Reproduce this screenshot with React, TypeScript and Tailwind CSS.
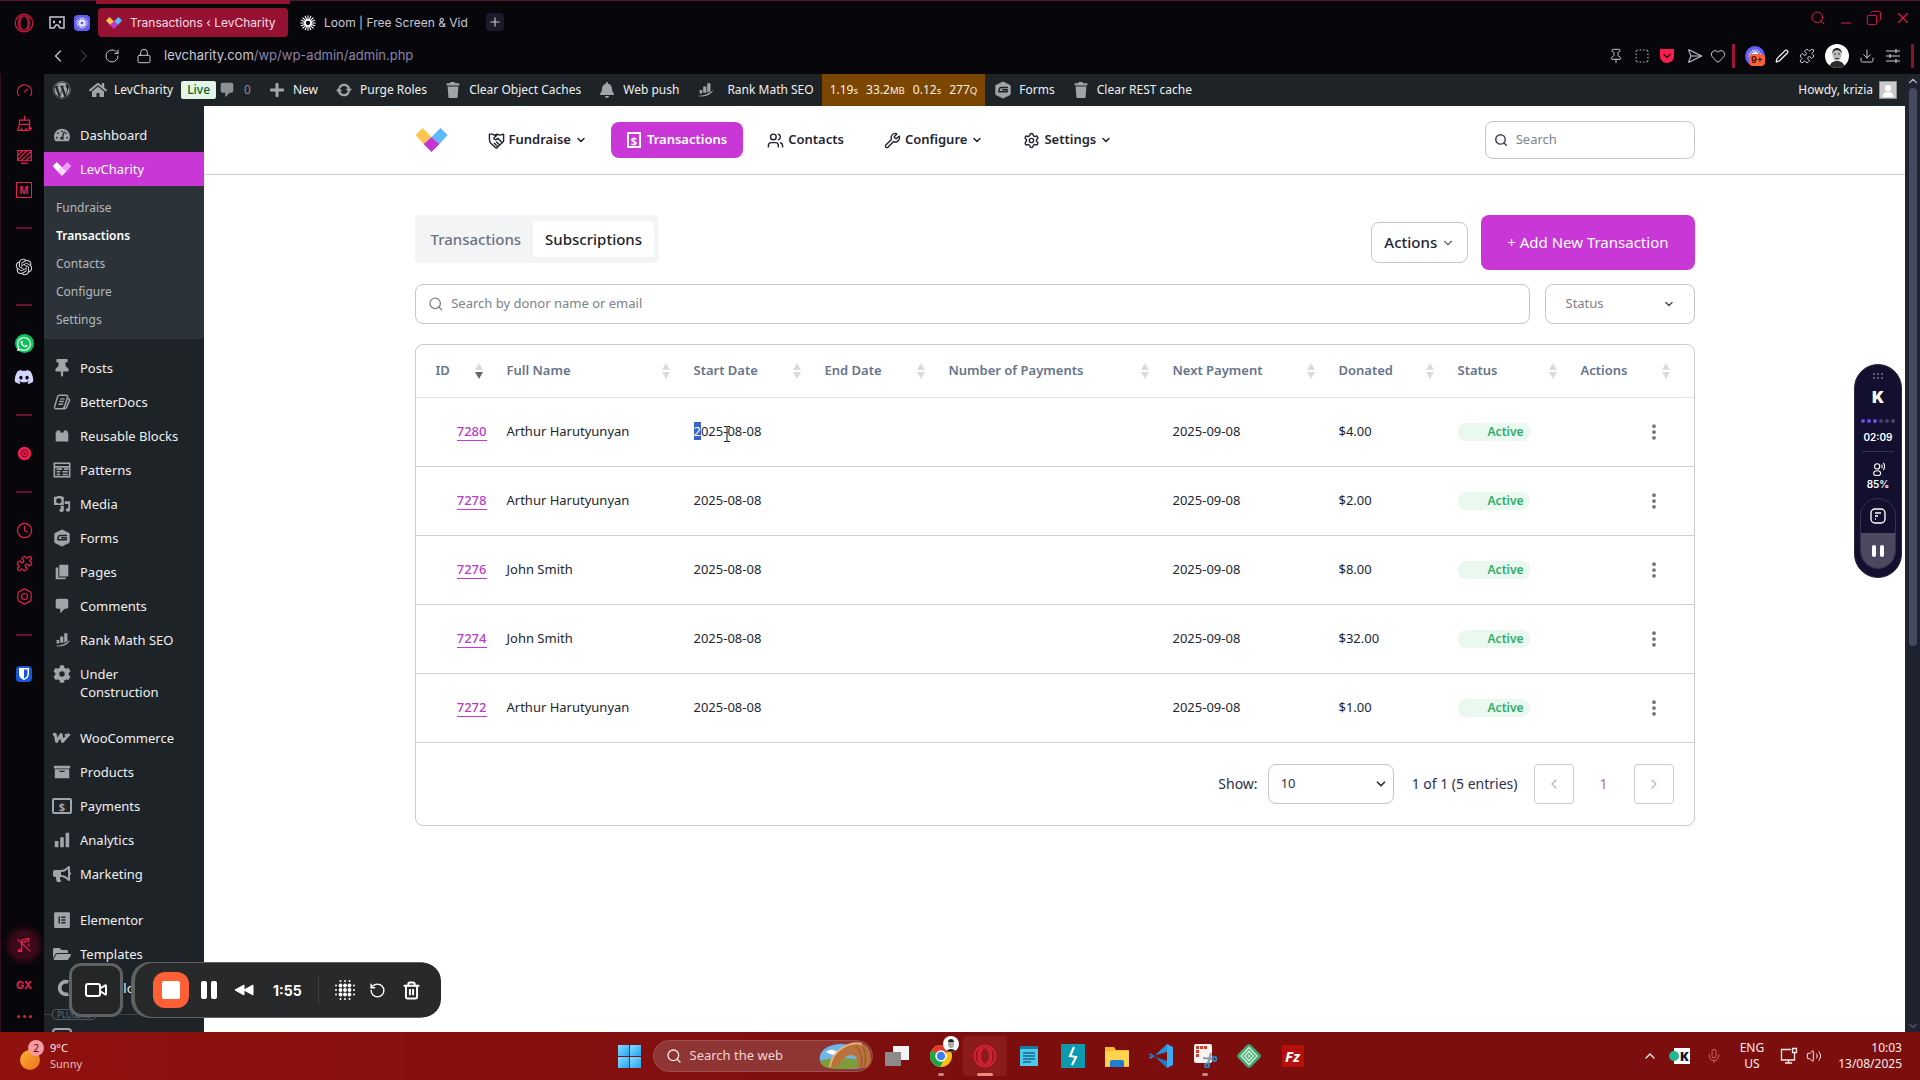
import type { ComponentType, ReactNode } from 'react'
import {
  ChevronDown, ChevronLeft, ChevronRight, ChevronUp, Clock, Download, Heart, Lock, Mic, Minus,
  MoreVertical, Pin, Plus, Puzzle, RotateCcw, RotateCw, Search, Send, Settings,
  Trash2, Users, Video, Volume2, Wrench, X, SquareDashed, Copy, Pen, Gauge
} from 'lucide-react'
import {
  FaBell, FaBullhorn, FaCog, FaDiscord, FaElementor, FaFolderOpen, FaHome, FaPlus,
  FaThumbtack, FaWhatsapp, FaWordpress, FaTachometerAlt
} from 'react-icons/fa'
import { RiOpenaiFill } from 'react-icons/ri'
import { clsx } from 'clsx'

type IconType = ComponentType<{ className?: string }>

interface Subscription {
  id: number
  name: string
  start: string
  next: string
  donated: string
}

const SUBSCRIPTIONS: Subscription[] = [
  { id: 7280, name: 'Arthur Harutyunyan', start: '2025-08-08', next: '2025-09-08', donated: '$4.00' },
  { id: 7278, name: 'Arthur Harutyunyan', start: '2025-08-08', next: '2025-09-08', donated: '$2.00' },
  { id: 7276, name: 'John Smith', start: '2025-08-08', next: '2025-09-08', donated: '$8.00' },
  { id: 7274, name: 'John Smith', start: '2025-08-08', next: '2025-09-08', donated: '$32.00' },
  { id: 7272, name: 'Arthur Harutyunyan', start: '2025-08-08', next: '2025-09-08', donated: '$1.00' }
]

const COLUMNS = [
  { label: 'ID', width: 'w-[75px]' },
  { label: 'Full Name', width: 'w-[187px]' },
  { label: 'Start Date', width: 'w-[131px]' },
  { label: 'End Date', width: 'w-[124px]' },
  { label: 'Number of Payments', width: 'w-[224px]' },
  { label: 'Next Payment', width: 'w-[166px]' },
  { label: 'Donated', width: 'w-[119px]' },
  { label: 'Status', width: 'w-[123px]' },
  { label: 'Actions', width: 'w-[129px]' }
]

/* ---------- Icons ---------- */

function Glyph({ className, children, box = '0 0 20 20' }: { className?: string; children: ReactNode; box?: string }) {
  return (
    <svg viewBox={box} className={className} fill="currentColor" aria-hidden="true">
      {children}
    </svg>
  )
}

function LevLogo({ className, mono }: { className?: string; mono?: boolean }) {
  return (
    <svg viewBox="0 0 32 24" className={className} aria-hidden="true">
      <path d="M0 7 7 0l9 9-8 7z" fill={mono ? '#ffffff' : '#fdc44f'} />
      <path d="m32 7-7-7-9 9 8 7z" fill={mono ? '#eb9df3' : '#5cb8ff'} />
      <path d="m16 9 8 7-8 8-8-8z" fill={mono ? '#f8dcfb' : '#c137cf'} />
    </svg>
  )
}

const OperaIcon: IconType = ({ className }) => (
  <svg viewBox="0 0 24 24" className={className} fill="none" stroke="currentColor" strokeWidth="1.6" aria-hidden="true">
    <circle cx="12" cy="12" r="10.5" />
    <ellipse cx="12" cy="12" rx="5" ry="8.5" />
    <path d="M8 3.500C4.500 8 4.500 16 8 20.500M16 3.500c3.500 4.500 3.500 12.500 0 17" />
  </svg>
)

const LoomIcon: IconType = ({ className }) => (
  <svg viewBox="0 0 24 24" className={className} stroke="currentColor" strokeLinecap="round" fill="none" aria-hidden="true">
    <circle cx="12" cy="12" r="4.500" strokeWidth="2.600" />
    <path d="M12 1v6M12 17v6M1 12h6M17 12h6M4.200 4.200l4.300 4.300M15.500 15.500l4.300 4.300M19.800 4.200l-4.300 4.300M8.500 15.500l-4.300 4.300M7.800 1.800l2 5M14.200 17.200l2 5M16.200 1.800l-2 5M9.800 17.200l-2 5M1.800 7.800l5 2M17.200 14.200l5 2M1.800 16.200l5-2M17.200 9.800l5-2" strokeWidth="1.600" />
  </svg>
)

const TrashSolid: IconType = ({ className }) => (
  <Glyph className={className}><path d="M7 1h5v1.500h5v2.500H3V2.500h4zM4 6h12l-1 13H5z" /></Glyph>
)
const CommentIcon: IconType = ({ className }) => (
  <Glyph className={className}><path d="M5 2h10q2 0 2 2v7q0 2-2 2h-2l-5 5v-5H5q-2 0-2-2V4q0-2 2-2z" /></Glyph>
)
const SyncIcon: IconType = ({ className }) => (
  <svg viewBox="0 0 20 20" className={className} fill="none" stroke="currentColor" strokeWidth="2.600" aria-hidden="true">
    <path d="M5 7.500a5.500 5.500 0 0 1 10.500 2M15 12.500a5.500 5.500 0 0 1-10.500-2" />
    <path d="M12 8.500h7l-3.500 4.500zM8 11.500H1L4.500 7z" fill="currentColor" stroke="none" />
  </svg>
)
const RankIcon: IconType = ({ className }) => (
  <Glyph className={className}>
    <path d="M4 10h3v4H4zM8 6h3.500v7H8zM12.500 2.500H16v9l-3.500 1.500zM1 16c6 1 12-1 18-6-2 6-12 9-18 6z" />
  </Glyph>
)
const FormsIcon: IconType = ({ className }) => (
  <svg viewBox="0 0 20 20" className={className} aria-hidden="true">
    <path d="M10 1l8 4v10l-8 4-8-4V5z" fill="currentColor" stroke="currentColor" strokeLinejoin="round" />
    <path d="M15.500 7.300H8q-2.500 0-2.500 4.700h9V9.800H9" fill="none" stroke="#1d2327" strokeWidth="1.700" />
  </svg>
)
const DocsIcon: IconType = ({ className }) => (
  <svg viewBox="0 0 20 20" className={className} fill="none" stroke="currentColor" strokeWidth="1.600" aria-hidden="true">
    <path d="M7 2.500h7q3 0 2 3l-3 9q-1 3-3 3H4q-3 0-2-3l3-10q.5-2 2-2zM17 6q2 1 1 3l-3 7q-1 2-4 1.500M8 6.500h5M7 9.500h5M6 12.500h5" />
  </svg>
)
const BlocksIcon: IconType = ({ className }) => (
  <Glyph className={className}><path d="M4 4h4v2h4V4h4v2h1v10H3V6h1z" /></Glyph>
)
const PatternsIcon: IconType = ({ className }) => (
  <svg viewBox="0 0 20 20" className={className} fill="none" stroke="currentColor" strokeWidth="1.800" aria-hidden="true">
    <rect x="1.500" y="2.500" width="17" height="15" />
    <path d="M2 6.500h16M4 9h6M4 12h4M4 15h4M12 9h5M10.500 12h6M10.500 15h6" />
  </svg>
)
const MediaIcon: IconType = ({ className }) => (
  <Glyph className={className}>
    <path fillRule="evenodd" d="M2 2h2l1-1h4l1 1h2v9H1V2zm4.500 1.500a3 3 0 1 0 0 6 3 3 0 0 0 0-6zM13 7h6v9q0 2.500-2.500 2.500T14 16.500t3-1.800V10h-4zM8 12h4v5q0 2-2.500 2T7 17t2-2z" />
  </Glyph>
)
const PagesIcon: IconType = ({ className }) => (
  <Glyph className={className}><path d="M7 2h10v13H7zM3 5h3v11h8v2H3z" /></Glyph>
)
const WooIcon: IconType = ({ className }) => (
  <svg viewBox="0 0 20 20" className={className} fill="none" stroke="currentColor" strokeWidth="3.200" strokeLinejoin="round" aria-hidden="true">
    <path d="M0 6h2.500l1.500 8 5-8 1.500 8L18 5.500" />
    <path d="M13 6.500h6" strokeWidth="2" />
  </svg>
)
const ProductsIcon: IconType = ({ className }) => (
  <Glyph className={className}><path fillRule="evenodd" d="M1 3h18v3H1zM2 7h16v10H2zm5 1.500v1.500h6V8.500z" /></Glyph>
)
const PaymentsIcon: IconType = () => (
  <span className="flex h-4 w-5 items-center justify-center rounded-xs border-2 text-[11px] leading-none font-bold text-[#a0a5aa]">$</span>
)
const BarsIcon: IconType = ({ className }) => (
  <Glyph className={className}><path d="M2 11h4v7H2zM8 7h4v11H8zM14 2h4v16h-4z" /></Glyph>
)
const CrocoIcon: IconType = ({ className }) => (
  <svg viewBox="0 0 20 20" className={className} fill="none" stroke="currentColor" strokeWidth="4" aria-hidden="true">
    <path d="M17 3.500A7 7 0 1 0 17 16.500" />
  </svg>
)
const ReceiptIcon: IconType = ({ className }) => (
  <span className={clsx('flex items-center justify-center border-2 text-[11px] leading-none font-bold', className)}>$</span>
)
const HandshakeIcon: IconType = ({ className }) => (
  <svg viewBox="0 0 24 24" className={className} fill="none" stroke="currentColor" strokeWidth="2" strokeLinejoin="round" strokeLinecap="round" aria-hidden="true">
    <path d="M2 3h4l3 1.500L13 3l4 1.500L22 3v10l-9 9c-1 .8-2 .5-3-.5L4 16C2 14 2 12 2 10zM13 4 8 9c1 3 4 2 6 0l5 5M12 14l4 4M9 16l4 4" />
  </svg>
)

const CleanerIcon: IconType = ({ className }) => (
  <svg viewBox="0 0 20 20" className={className} fill="none" stroke="currentColor" strokeWidth="1.400" aria-hidden="true">
    <path d="M10 1v5M4 6h12v5H4zM4 11l-2 7h13l1-7M6 18l1-3M11 18l1-3M17 14v4M15 16h4" />
  </svg>
)
const StripesIcon: IconType = ({ className }) => (
  <svg viewBox="0 0 20 20" className={className} fill="none" stroke="currentColor" strokeWidth="1.400" aria-hidden="true">
    <path d="M2 3h16v12H2zM2 9l6-6M2 14 13 3M6 15 18 4M11 15l7-6M6 18h8" />
  </svg>
)
const ModsIcon: IconType = ({ className }) => (
  <span className={clsx('flex items-center justify-center border text-[10px] leading-none font-bold', className)}>M</span>
)
const PlayerIcon: IconType = ({ className }) => (
  <svg viewBox="0 0 20 20" className={className} aria-hidden="true">
    <circle cx="10" cy="10" r="8" fill="currentColor" />
    <circle cx="10" cy="10" r="4" fill="none" stroke="#5c0518" />
    <path d="m9 8 3 2-3 2z" fill="#5c0518" />
  </svg>
)
const HexGear: IconType = ({ className }) => (
  <svg viewBox="0 0 20 20" className={className} fill="none" stroke="currentColor" strokeWidth="1.400" aria-hidden="true">
    <path d="m10 1 3 1.500 4.500 2.500.5 5-.5 5-4.500 2.500L10 19l-3-1.500L2.500 15 2 10l.5-5L7 2.500z" />
    <circle cx="10" cy="10" r="3.500" />
  </svg>
)

/* ---------- Browser chrome ---------- */

function BrowserBar() {
  return (
    <header className="relative shrink-0 bg-[#07060b] text-[#c9c7d3] font-[Inter,sans-serif]">
      <div className="absolute top-0 left-0 h-px w-full bg-[#5a1230]" />
      <div className="absolute top-0 left-24 h-1 w-[194px] bg-[#93122f]" />
      <div className="flex h-[37px] items-end pl-3">
        <div className="flex h-[29px] items-center pl-0.5">
          <OperaIcon className="size-5 text-[#c3193f]" />
          <svg viewBox="0 0 18 14" className="ml-3.5 h-3.5 w-4.5" fill="none" stroke="currentColor" strokeWidth="1.500" aria-hidden="true">
            <path d="M2 1h14v11h-4l-2-3H8l-2 3H2z" />
            <path d="M5 6h2M11 6h2" strokeWidth="2.500" />
          </svg>
          <span className="ml-2 flex size-4 items-center justify-center rounded bg-[#625df5] text-white">
            <LoomIcon className="size-3" />
          </span>
        </div>
        <button className="ml-2 flex h-[29px] w-[190px] items-center gap-2 rounded-sm bg-[#951232] pl-2 text-[12px] whitespace-nowrap text-[#fbdfe6]">
          <LevLogo className="h-3 w-4 shrink-0" />
          Transactions ‹ LevCharity
        </button>
        <button className="flex h-[29px] w-[190px] items-center gap-2 pl-3 text-[12px] whitespace-nowrap">
          <LoomIcon className="size-4 shrink-0 text-white" />
          Loom | Free Screen &amp; Vid
        </button>
        <button aria-label="New tab" className="mb-1.5 ml-2 flex size-4.5 items-center justify-center rounded bg-[#1c1a2a]">
          <Plus className="size-3.5" />
        </button>
        <div className="mb-1.5 ml-auto flex items-center gap-3 pr-2 text-[#e21c4a]">
          <Search className="size-4" strokeWidth={1.500} />
          <Minus className="mt-2.5 size-4" strokeWidth={1.500} />
          <Copy className="size-4 -scale-x-100" strokeWidth={1.500} />
          <X className="size-4.5" strokeWidth={1.500} />
        </div>
      </div>
      <div className="flex h-[37px] items-center pl-12">
        <ChevronLeft className="size-5" strokeWidth={1.500} />
        <ChevronRight className="ml-1.5 size-5 text-[#3a3845]" strokeWidth={1.500} />
        <RotateCw className="ml-2.5 size-4" strokeWidth={1.500} />
        <Lock className="ml-4 size-4" strokeWidth={1.500} />
        <p className="ml-3 text-[13px]">
          levcharity.com<span className="text-[#8a82a8]">/wp/wp-admin/admin.php</span>
        </p>
        <div className="ml-auto flex items-center gap-2.5 pr-1.5">
          <Pin className="size-4" strokeWidth={1.500} />
          <SquareDashed className="size-4" strokeWidth={1.500} />
          <span className="flex h-3.5 w-3.5 items-center justify-center rounded-t-sm rounded-b-full bg-[#fa1e4e] text-[#3d0512]">
            <ChevronDown className="size-3" strokeWidth={3} />
          </span>
          <Send className="size-4 rotate-45" strokeWidth={1.500} />
          <Heart className="size-4" strokeWidth={1.500} />
          <span className="-ml-1 h-6 w-[3px] bg-[#a0163a]" />
          <span className="relative flex size-5 items-center justify-center rounded-full bg-[#625df5] text-white">
            <LoomIcon className="size-3.5" />
            <span className="absolute top-2 left-1 rounded-sm bg-[#ff6137] px-0.5 text-[9px] leading-3 font-medium text-black">9+</span>
          </span>
          <Pen className="size-3.5 text-white" strokeWidth={2} />
          <Puzzle className="size-4" strokeWidth={1.500} />
          <svg viewBox="0 0 24 24" className="size-6 rounded-full bg-white" aria-hidden="true">
            <path d="M4 24c1-6 5-7 8-7s7 1 8 7z" fill="#2d2d2d" />
            <ellipse cx="12" cy="11" rx="4.500" ry="6" fill="#b9b9b9" />
            <path d="M7 10c0-8 10-8 10 0-1-3-3-4-5-4s-4 1-5 4z" fill="#222" />
            <path d="M9 10h2M13 10h2M10 14.500h4" stroke="#333" />
          </svg>
          <Download className="size-4" strokeWidth={1.500} />
          <svg viewBox="0 0 16 16" className="size-4" fill="none" stroke="currentColor" strokeWidth="1.200" aria-hidden="true">
            <path d="M1 3h14M1 8h14M1 13h14M11 1v4M5 6v4M11 11v4" />
          </svg>
          <span className="h-6 w-[3px] bg-[#85132f]" />
        </div>
      </div>
    </header>
  )
}

const Dash = () => (
  <li className="flex h-11 w-full items-center justify-center">
    <span className="h-0.5 w-4 rounded bg-[#6b122f]" />
  </li>
)

function RailIcon({ icon: Icon, className = 'size-[17px]' }: { icon: IconType; className?: string }) {
  return (
    <li className="flex h-[33px] items-center justify-center">
      <Icon className={className} />
    </li>
  )
}

const thin = (Icon: typeof Clock): IconType => ({ className }) => <Icon className={className} strokeWidth={1.700} />
const ThinGauge = thin(Gauge)
const ThinClock = thin(Clock)
const ThinPuzzle = thin(Puzzle)

function OperaRail() {
  return (
    <nav className="flex w-11 shrink-0 flex-col border-l border-[#30101f] bg-[#07060b] pl-[3px] text-[#e8204f]">
      <ul>
        <RailIcon icon={ThinGauge} />
        <RailIcon icon={CleanerIcon} />
        <RailIcon icon={StripesIcon} />
        <RailIcon icon={ModsIcon} className="size-4" />
        <Dash />
        <RailIcon icon={RiOpenaiFill} className="size-5 text-[#cfcfd4]" />
        <Dash />
        <li className="flex h-[33px] items-center justify-center">
          <span className="flex size-[19px] items-center justify-center rounded-full bg-[#0bc45b] text-white">
            <FaWhatsapp className="size-4" />
          </span>
        </li>
        <RailIcon icon={FaDiscord} className="size-5 text-[#d5d5ff]" />
        <Dash />
        <RailIcon icon={PlayerIcon} />
        <Dash />
        <RailIcon icon={ThinClock} />
        <RailIcon icon={ThinPuzzle} />
        <RailIcon icon={HexGear} />
        <Dash />
        <li className="flex h-[33px] items-center justify-center">
          <svg viewBox="0 0 16 16" className="size-4 rounded-sm bg-[#1a56d6]" aria-hidden="true">
            <path d="M3 2h10v6c0 3-2 5-5 6-3-1-5-3-5-6z" fill="#fff" />
            <path d="M8 3.500h3.500V8c0 2-1.500 3.500-3.500 4.500z" fill="#1a56d6" />
          </svg>
        </li>
      </ul>
      <ul className="mt-auto flex flex-col items-center gap-[18px] pb-2.5">
        <li className="flex size-7 items-center justify-center rounded-full bg-[#3b0a1a] shadow-[0_0_6px_3px_#3b0a1a]">
          <svg viewBox="0 0 20 20" className="size-4" fill="none" stroke="currentColor" strokeWidth="1.600" aria-hidden="true">
            <path d="M7 16V4l9-2v3L7 7M3 16h4v2H3zM2 3l16 15M16 8v4" />
          </svg>
        </li>
        <li className="font-[Inter,sans-serif] text-[11px] font-bold">GX</li>
        <li className="flex gap-[3px] pt-1 pb-1">
          <span className="size-[3px] rounded-full bg-current" />
          <span className="size-[3px] rounded-full bg-current" />
          <span className="size-[3px] rounded-full bg-current" />
        </li>
      </ul>
    </nav>
  )
}

/* ---------- WordPress admin ---------- */

function BarItem({ icon: Icon, children, small, wide }: { icon: IconType; children?: ReactNode; small?: boolean; wide?: boolean }) {
  return (
    <a href="#" className={clsx('flex h-full items-center px-2', wide ? 'gap-3' : 'gap-1.5')}>
      <span className="flex w-5 justify-center">
        <Icon className={clsx('text-[#a0a5aa]', small ? 'size-4' : 'size-[18px]')} />
      </span>
      {children}
    </a>
  )
}

function AdminBar() {
  return (
    <div className="flex h-8 shrink-0 items-center bg-[#1d2327] text-[12px] whitespace-nowrap text-[#f0f0f1]">
      <BarItem icon={FaWordpress} />
      <BarItem icon={FaHome}>
        LevCharity
        <span className="ml-0.5 rounded-xs bg-[#e3f5e6] px-1.5 leading-[18px] font-medium text-[#0e5f22]">Live</span>
      </BarItem>
      <a href="#" className="-ml-1.5 flex items-center gap-2 pr-2 text-[#8c9196]">
        <CommentIcon className="size-[18px]" />0
      </a>
      <BarItem icon={FaPlus} small>New</BarItem>
      <BarItem icon={SyncIcon}>Purge Roles</BarItem>
      <BarItem icon={TrashSolid}>Clear Object Caches</BarItem>
      <BarItem icon={FaBell} small>Web push</BarItem>
      <BarItem icon={RankIcon} wide>Rank Math SEO</BarItem>
      <a href="#" className="flex h-full items-center gap-2 bg-[#7a4600] px-2 text-[#fbf1e0]">
        <span>1.19<small>s</small></span>
        <span>33.2<small>MB</small></span>
        <span>0.12<small>s</small></span>
        <span>277<small>Q</small></span>
      </a>
      <BarItem icon={FormsIcon}>Forms</BarItem>
      <BarItem icon={TrashSolid}>Clear REST cache</BarItem>
      <a href="#" className="ml-auto flex items-center gap-1.5 pr-2">
        Howdy, krizia
        <svg viewBox="0 0 18 18" className="size-[18px] border border-[#8c8f94] bg-[#c9c9c9]" aria-hidden="true">
          <circle cx="9" cy="7" r="3.500" fill="#fff" />
          <path d="M3 17c0-4 3-6 6-6s6 2 6 6z" fill="#fff" />
        </svg>
      </a>
    </div>
  )
}

interface MenuEntry {
  label: string
  icon: IconType
}

const MENU_CONTENT: MenuEntry[] = [
  { label: 'Posts', icon: FaThumbtack },
  { label: 'BetterDocs', icon: DocsIcon },
  { label: 'Reusable Blocks', icon: BlocksIcon },
  { label: 'Patterns', icon: PatternsIcon },
  { label: 'Media', icon: MediaIcon },
  { label: 'Forms', icon: FormsIcon },
  { label: 'Pages', icon: PagesIcon },
  { label: 'Comments', icon: CommentIcon },
  { label: 'Rank Math SEO', icon: RankIcon },
  { label: 'Under Construction', icon: FaCog }
]

const MENU_SHOP: MenuEntry[] = [
  { label: 'WooCommerce', icon: WooIcon },
  { label: 'Products', icon: ProductsIcon },
  { label: 'Payments', icon: PaymentsIcon },
  { label: 'Analytics', icon: BarsIcon },
  { label: 'Marketing', icon: FaBullhorn }
]

const MENU_BUILDER: MenuEntry[] = [
  { label: 'Elementor', icon: FaElementor },
  { label: 'Templates', icon: FaFolderOpen },
  { label: 'Crocoblo', icon: CrocoIcon }
]

function MenuGroup({ items }: { items: MenuEntry[] }) {
  return (
    <ul className="mt-3">
      {items.map(({ label, icon: Icon }) => (
        <li key={label}>
          <a href="#" className="flex items-start gap-2 py-2 pr-8 pl-2 leading-[18px]">
            <span className="flex h-[18px] w-5 shrink-0 items-center justify-center">
              <Icon className="size-[18px] text-[#a0a5aa]" />
            </span>
            <span className={label.startsWith('Under') ? '' : 'whitespace-nowrap'}>{label}</span>
          </a>
        </li>
      ))}
    </ul>
  )
}

function WpMenu() {
  return (
    <nav className="w-40 shrink-0 overflow-hidden bg-[#1d2327] text-[13px] text-[#f0f0f1]">
      <a href="#" className="mt-3 flex items-center gap-2 px-2 py-2 leading-[18px]">
        <span className="flex w-5 justify-center"><FaTachometerAlt className="size-4 text-[#a0a5aa]" /></span>
        Dashboard
      </a>
      <a href="#" className="flex items-center gap-2 bg-[#c938d6] px-2 py-2 leading-[18px] text-white">
        <LevLogo mono className="h-3.5 w-5" />
        LevCharity
      </a>
      <ul className="bg-[#2c3338] pt-2 pb-[5px] text-[12px] leading-7 text-[#b4b9be]">
        {['Fundraise', 'Transactions', 'Contacts', 'Configure', 'Settings'].map((label) => (
          <li key={label}>
            <a href="#" className={clsx('block pl-3', label === 'Transactions' && 'font-semibold text-white')}>{label}</a>
          </li>
        ))}
      </ul>
      <MenuGroup items={MENU_CONTENT} />
      <MenuGroup items={MENU_SHOP} />
      <MenuGroup items={MENU_BUILDER} />
      <div className="mt-1 flex items-center text-[#6b7177]">
        <span className="h-px w-2 bg-[#3c4247]" />
        <span className="rounded border border-[#50575e] px-1 text-[8px] leading-[9px]">PLUGINS</span>
        <span className="h-px flex-1 bg-[#3c4247]" />
      </div>
      <div className="mt-2 ml-2 h-4 w-5 rounded-sm border-2 border-[#a0a5aa]" />
    </nav>
  )
}

/* ---------- LevCharity page ---------- */

function NavItem({ icon: Icon, label, menu, active }: { icon: IconType; label: string; menu?: boolean; active?: boolean }) {
  return (
    <button className={clsx('flex h-9 items-center gap-1 rounded-lg px-4 text-[13px] font-semibold', active ? 'bg-[#c938d6] text-white' : 'text-[#1f2430]')}>
      <Icon className={active ? 'mr-0.5 h-4 w-3.5' : 'size-[17px]'} />
      {label}
      {menu && <ChevronDown className="size-3" strokeWidth={3} />}
    </button>
  )
}

function PageHeader() {
  return (
    <div className="border-b border-[#cfcfd3]">
      <div className="mx-auto flex h-[68px] max-w-[1280px] items-center">
        <LevLogo className="mr-6 h-6 w-[33px]" />
        <nav className="flex items-center gap-2">
          <NavItem icon={HandshakeIcon} label="Fundraise" menu />
          <NavItem icon={ReceiptIcon} label="Transactions" active />
          <NavItem icon={Users} label="Contacts" />
          <NavItem icon={Wrench} label="Configure" menu />
          <NavItem icon={Settings} label="Settings" menu />
        </nav>
        <label className="ml-auto flex h-[38px] w-[210px] items-center gap-2 rounded-lg border border-[#c4c6cb] px-2">
          <Search className="size-4 text-[#3f4450]" strokeWidth={2.500} />
          <input type="search" aria-label="Search" placeholder="Search" className="w-full min-w-0 text-[13px] outline-none placeholder:text-[#7d828c]" />
        </label>
      </div>
    </div>
  )
}

function SortIcon({ active }: { active?: boolean }) {
  return (
    <svg viewBox="0 0 8 16" className="h-4 w-2 shrink-0" aria-hidden="true">
      <path d="M4 0 8 7H0z" fill="#d9dadd" />
      <path d="m4 16 4-7H0z" fill={active ? '#63676f' : '#d9dadd'} />
    </svg>
  )
}

function TextCursor() {
  return (
    <svg viewBox="0 0 8 16" className="absolute top-1 left-[29px] h-4 w-2" fill="none" stroke="#111" aria-hidden="true">
      <path d="M1 .5h2.500l.5.5.5-.5H7M4 1v14M1 15.500h2.500l.5-.5.5.5H7" />
    </svg>
  )
}

function SubscriptionTable() {
  return (
    <div className="mt-5 overflow-hidden rounded-lg border border-[#c9cbd0]">
      <table className="w-full table-fixed text-left text-[13px] text-[#22262f]">
        <thead>
          <tr className="h-[52px] border-b border-[#e1e2e6] text-[#66748a]">
            {COLUMNS.map(({ label, width }, i) => (
              <th key={label} scope="col" className={clsx(width, 'font-semibold', i === 0 ? 'pl-5' : 'pl-4', i === COLUMNS.length - 1 ? 'pr-6' : 'pr-2')}>
                <span className="flex items-center justify-between whitespace-nowrap">
                  {label}
                  <SortIcon active={i === 0} />
                </span>
              </th>
            ))}
          </tr>
        </thead>
        <tbody>
          {SUBSCRIPTIONS.map((row, i) => (
            <tr key={row.id} className="h-[69px] border-b border-[#cfd1d6]">
              <td className="pr-1 text-right">
                <a href="#" className="border-b border-[#c938d6] font-medium text-[#b93cc6]">{row.id}</a>
              </td>
              <td className="pl-4">{row.name}</td>
              <td className="pl-4">
                {i === 0 ? (
                  <span className="relative">
                    <span className="bg-[#3a63c8] text-white">{row.start[0]}</span>
                    {row.start.slice(1)}
                    <TextCursor />
                  </span>
                ) : row.start}
              </td>
              <td />
              <td />
              <td className="pl-4">{row.next}</td>
              <td className="pl-4">{row.donated}</td>
              <td className="pl-4">
                <span className="block w-[72px] rounded-lg bg-[#eaf8f0] pr-1.5 text-right text-[12px] leading-[18px] font-semibold text-[#2fae68]">Active</span>
              </td>
              <td className="pr-[30px] text-right">
                <button aria-label={`Actions for ${row.id}`} className="align-middle text-[#6c7078]">
                  <MoreVertical className="size-5" strokeWidth={2.500} />
                </button>
              </td>
            </tr>
          ))}
        </tbody>
      </table>
      <div className="flex h-[82px] items-center justify-end pr-5 text-[14px] text-[#2b2f4a]">
        <label htmlFor="page-size">Show:</label>
        <span className="relative ml-2.5 flex items-center">
          <select id="page-size" className="h-10 w-[126px] appearance-none rounded-lg border border-[#c4c6cb] px-3 text-[13px]">
            <option>10</option>
          </select>
          <ChevronDown className="pointer-events-none absolute right-1.5 size-3.5" strokeWidth={3} />
        </span>
        <span className="ml-[18px]">1 of 1 (5 entries)</span>
        <button aria-label="Previous page" className="ml-4 flex size-10 items-center justify-center rounded border border-[#c9cbd0] text-[#b6b9c0]">
          <ChevronLeft className="size-4" />
        </button>
        <button className="w-15 text-[#c05fcb]">1</button>
        <button aria-label="Next page" className="flex size-10 items-center justify-center rounded border border-[#c9cbd0] text-[#b6b9c0]">
          <ChevronRight className="size-4" />
        </button>
      </div>
    </div>
  )
}

function Page() {
  return (
    <main className="min-w-0 flex-1 bg-white">
      <PageHeader />
      <div className="mx-auto max-w-[1280px] pt-10">
        <div className="flex items-start justify-between">
          <div role="tablist" className="flex h-12 items-center rounded-sm bg-[#f3f4f5] px-1 text-[15px] font-medium">
            <button role="tab" aria-selected="false" className="h-9 px-3 text-[#6b7280]">Transactions</button>
            <button role="tab" aria-selected="true" className="h-9 rounded-sm bg-white px-3 text-[#1a1f2b]">Subscriptions</button>
          </div>
          <div className="flex items-center gap-[13px]">
            <button className="flex h-[41px] items-center gap-1 rounded-lg border border-[#c4c6cb] px-3 text-[15px] font-medium text-[#1f2430]">
              Actions
              <ChevronDown className="size-3.5 text-[#5b606b]" />
            </button>
            <button className="h-[55px] rounded-lg bg-[#c938d6] px-[26px] text-[15px] text-white">+ Add New Transaction</button>
          </div>
        </div>
        <div className="mt-3.5 flex gap-[15px]">
          <label className="flex h-10 flex-1 items-center gap-2 rounded-lg border border-[#c4c6cb] px-3">
            <Search className="size-4 text-[#7d828c]" />
            <input aria-label="Search by donor name or email" placeholder="Search by donor name or email" className="w-full text-[13px] outline-none placeholder:text-[#7d828c]" />
          </label>
          <div className="relative flex items-center">
            <select aria-label="Status" className="h-10 w-[150px] appearance-none rounded-lg border border-[#c4c6cb] px-5 text-[13px] text-[#7d828c]">
              <option>Status</option>
            </select>
            <ChevronDown className="pointer-events-none absolute right-5 size-3 text-[#4b505b]" strokeWidth={3} />
          </div>
        </div>
        <SubscriptionTable />
      </div>
    </main>
  )
}

/* ---------- Floating recorders ---------- */

function RecorderBar() {
  return (
    <div className="absolute bottom-[15px] left-[69px] z-10 flex items-center gap-3 font-[Inter,sans-serif] text-white">
      <button aria-label="Camera" className="flex h-[54px] w-[54px] items-center justify-center rounded-xl border-[3px] border-[#5f6163] bg-[#242628]">
        <Video className="size-6" />
      </button>
      <div className="flex h-[54px] items-center rounded-[18px] bg-[#28292a] pr-5 pl-[18px] shadow-[-3px_0_0_1px_#5f6163]">
        <button aria-label="Stop" className="flex size-9 items-center justify-center rounded-xl bg-[#ff5f35]">
          <span className="size-[18px] rounded-xs bg-white" />
        </button>
        <button aria-label="Pause" className="ml-3 flex gap-1">
          <span className="h-[18px] w-1.5 rounded-xs bg-white" />
          <span className="h-[18px] w-1.5 rounded-xs bg-white" />
        </button>
        <button aria-label="Rewind" className="ml-4">
          <svg viewBox="0 0 22 14" className="h-3.5 w-[22px]" fill="#fff" stroke="#fff" strokeLinejoin="round" aria-hidden="true">
            <path d="M11 2v10L2 7zM20 2v10l-9-5z" />
          </svg>
        </button>
        <span className="ml-[18px] text-[14px] font-bold">1:55</span>
        <span className="mx-4 h-7 w-px bg-[#3d3f41]" />
        <svg viewBox="0 0 20 20" className="size-5" fill="#fff" aria-hidden="true">
          {[1, 5.500, 10, 14.500, 19].map((y) => [1, 5.500, 10, 14.500, 19].map((x) => {
            const edge = Math.max(Math.abs(x - 10), Math.abs(y - 10)) > 8
            const corner = Math.abs(x - 10) + Math.abs(y - 10) > 14
            return corner ? null : <circle key={`${x}-${y}`} cx={x} cy={y} r={edge ? 1 : 1.900} />
          }))}
        </svg>
        <RotateCcw className="ml-3.5 size-[17px]" />
        <Trash2 className="ml-4 size-[19px]" strokeWidth={2.500} />
      </div>
    </div>
  )
}

function SidePill() {
  return (
    <aside className="absolute top-[290px] right-[18px] z-10 flex h-[214px] w-12 flex-col items-center rounded-3xl border border-[#2c2b3e] bg-[#12102e] px-1.5 pb-2 font-[Inter,sans-serif] text-white">
      <div className="mt-2 grid grid-cols-3 gap-0.5">
        {[0, 1, 2, 3, 4, 5].map((n) => <span key={n} className="size-0.5 rounded-full bg-[#77758f]" />)}
      </div>
      <span className="mt-2 text-[16px] leading-5 font-black">K</span>
      <div className="mt-3 flex gap-0.5">
        {[0, 1, 2, 3, 4, 5].map((n) => (
          <span key={n} className={clsx('size-1 rounded-full', n < 3 ? 'bg-[#6350ef]' : 'bg-[#45436a]')} />
        ))}
      </div>
      <span className="mt-1.5 text-[10px] leading-4 font-semibold">02:09</span>
      <span className="mt-1.5 h-px w-8 shrink-0 bg-[#35334d]" />
      <svg viewBox="0 0 16 16" className="mt-2.5 size-3.5 shrink-0" fill="none" stroke="#fff" strokeWidth="1.300" aria-hidden="true">
        <circle cx="7" cy="5" r="3" />
        <path d="M3 13c0-4 8-4 8 0s-8 3-8 0M12 3c1 1 1 3 0 4M14 1c2 2 2 6 0 8" />
      </svg>
      <span className="text-[10px] leading-4 font-semibold">85%</span>
      <div className="mt-1.5 flex w-9 flex-1 flex-col overflow-hidden rounded-[18px] border border-[#35334d]">
        <button aria-label="Notes" className="flex h-[34px] items-center justify-center">
          <svg viewBox="0 0 16 16" className="size-4" fill="none" stroke="#fff" strokeWidth="1.400" aria-hidden="true">
            <rect x="1" y="1" width="14" height="14" rx="4" />
            <path d="M5 5h6M5 8h3M5 11h1" />
          </svg>
        </button>
        <button aria-label="Pause recording" className="flex flex-1 items-center justify-center gap-1 bg-[#4b4960]">
          <span className="h-3 w-1 rounded-xs bg-white" />
          <span className="h-3 w-1 rounded-xs bg-white" />
        </button>
      </div>
    </aside>
  )
}

/* ---------- Taskbar ---------- */

function TaskIcon({ children, label, open, active }: { children: ReactNode; label: string; open?: boolean; active?: boolean }) {
  return (
    <button aria-label={label} className={clsx('relative flex h-10 w-11 items-center justify-center rounded', active && 'bg-[#8b1c1b]')}>
      {children}
      {(open || active) && (
        <span className={clsx('absolute bottom-0 h-[3px] rounded', active ? 'w-4 bg-[#f08a7c]' : 'w-1.5 bg-[#c98580]')} />
      )}
    </button>
  )
}

function Taskbar() {
  return (
    <footer className="grid h-12 shrink-0 grid-cols-[1fr_auto_1fr] items-center bg-linear-to-r from-[#90110e] via-[#7c0f0e] to-[#7c0f0e] text-[12px] text-[#fbeceb]">
      <div className="flex items-center gap-1.5 pl-4 text-[11px] leading-4">
        <span className="relative size-7">
          <span className="absolute bottom-0 left-1 size-5 rounded-full bg-linear-to-br from-[#fcb22f] to-[#e9701c]" />
          <span className="absolute -top-0.5 right-0 flex size-4 items-center justify-center rounded-full bg-[#f79a9f] text-[10px] text-[#4d0c0c]">2</span>
        </span>
        <span>9°C<br /><span className="text-[#e5bdbb]">Sunny</span></span>
      </div>
      <div className="flex items-center">
        <button aria-label="Start" className="mr-3 ml-3 grid grid-cols-2 gap-px">
          {[0, 1, 2, 3].map((n) => <span key={n} className="size-[11px] bg-linear-to-br from-[#7fdcff] to-[#1ca4f0]" />)}
        </button>
        <label className="flex h-8 w-[220px] items-center gap-2 overflow-hidden rounded-full border border-[#a04d4c] bg-[#8f3533] pl-3">
          <Search className="size-4 shrink-0" strokeWidth={2} />
          <input aria-label="Search the web" placeholder="Search the web" className="w-full min-w-0 text-[13px] outline-none placeholder:text-[#f3d6d4]" />
          <svg viewBox="0 0 54 28" className="h-7 w-[54px] shrink-0" aria-hidden="true">
            <path d="M2 14C4 4 20 0 30 3s22 4 22 14-12 10-26 10S0 24 2 14z" fill="#6fb6e8" />
            <path d="M8 10q5-4 9-1 5-1 6 3-8 3-15-2z" fill="#fff" />
            <path d="M2 19c10-4 30-4 46 0 0 7-12 8-24 8S3 26 2 19z" fill="#7f9c3c" />
            <path d="M12 25C14 8 32-1 44 2s9 21 7 24H40C42 12 30 6 20 25z" fill="#b9723c" />
            <path d="M12 25C14 8 32-1 44 2" stroke="#e6b07a" strokeWidth="2" fill="none" />
            <path d="M45 5c3 6 3 14 1 20M38 4c5 5 7 14 5 21" stroke="#8f5228" fill="none" />
          </svg>
        </label>
        <div className="ml-0.5 flex">
          <TaskIcon label="Task view">
            <svg viewBox="0 0 24 24" className="size-6" aria-hidden="true">
              <path d="M8 2h16v14H8z" fill="#f3f3f3" />
              <path d="M0 8h16v14H0z" fill="#8f8a8a" />
            </svg>
          </TaskIcon>
          <TaskIcon label="Chrome" open>
            <svg viewBox="0 0 24 24" className="size-6" aria-hidden="true">
              <circle cx="12" cy="12" r="11" fill="#fbc116" />
              <path d="M12 12 2.500 6.500a11 11 0 0 1 19 0z" fill="#e33b2e" />
              <path d="M12 12 2.500 6.500a11 11 0 0 0 8.500 16.500l5-9z" fill="#1ea446" />
              <circle cx="12" cy="12" r="5" fill="#3f7ff0" stroke="#fff" strokeWidth="1.500" />
            </svg>
            <svg viewBox="0 0 16 16" className="absolute top-0 right-1 size-4 rounded-full bg-white" aria-hidden="true">
              <ellipse cx="8" cy="8" rx="3" ry="4" fill="#aaa" />
              <path d="M5 6c0-4 6-4 6 0zM3 16c1-4 9-4 10 0z" fill="#222" />
            </svg>
          </TaskIcon>
          <TaskIcon label="Opera GX" active>
            <OperaIcon className="size-6 text-[#dd2039]" />
          </TaskIcon>
          <TaskIcon label="Notepad">
            <svg viewBox="0 0 20 24" className="h-6 w-5" aria-hidden="true">
              <path d="M1 2h18v20H1z" fill="#4cc8ea" />
              <path d="M1 2h18v3H1z" fill="#197a9f" />
              <path d="M4 9h12M4 12h12M4 15h12M4 18h8" stroke="#15678e" strokeWidth="1.400" />
            </svg>
          </TaskIcon>
          <TaskIcon label="Terminal">
            <svg viewBox="0 0 24 24" className="size-6" aria-hidden="true">
              <path d="M0 0h24v24H0z" fill="#0d9aaf" />
              <path d="m13 3-4 9 6 1-4 8" fill="none" stroke="#fff" strokeWidth="2.200" />
            </svg>
          </TaskIcon>
          <TaskIcon label="File Explorer">
            <svg viewBox="0 0 24 22" className="h-5.5 w-6" aria-hidden="true">
              <path d="M0 2h9l2 3h13v17H0z" fill="#f6b92b" />
              <path d="M0 6h24v15H0z" fill="#fdd350" />
              <path d="M5 22v-5q0-2 2-2h10q2 0 2 2v5z" fill="#1c7fd4" />
            </svg>
          </TaskIcon>
          <TaskIcon label="Visual Studio Code">
            <svg viewBox="0 0 24 24" className="size-6" aria-hidden="true">
              <path d="M18 0 3 14l-2 1-1-2L18 8z" fill="#2a8fd8" />
              <path d="M18 24 3 10 1 9l-1 2 18 6z" fill="#1e7ac4" />
              <path d="m18 0 6 3v18l-6 3z" fill="#3fa9f0" />
            </svg>
          </TaskIcon>
          <TaskIcon label="Snipping Tool" open>
            <svg viewBox="0 0 24 24" className="size-6" aria-hidden="true">
              <rect x="1" y="0" width="18" height="19" rx="2" fill="#f6f3f1" />
              <path d="M4.500 13V3.500H14" fill="none" stroke="#d83b2c" strokeWidth="3" strokeDasharray="3 1" />
              <path d="m10 14 10 1M18 9l-3 11" stroke="#8f9aa5" strokeWidth="2.200" />
              <circle cx="14" cy="21.500" r="2" fill="none" stroke="#2b88c9" strokeWidth="1.800" />
              <circle cx="21.500" cy="15" r="2" fill="none" stroke="#2b88c9" strokeWidth="1.800" />
            </svg>
          </TaskIcon>
          <TaskIcon label="Local">
            <svg viewBox="0 0 24 24" className="size-6" aria-hidden="true">
              <path d="M9.500 1.500q2.500-2.500 5 0l8 8q2.500 2.500 0 5l-8 8q-2.500 2.500-5 0l-8-8q-2.500-2.500 0-5z" fill="#42a870" />
              <path d="m12 3.500 8 8.500-8 8.500L4 12zM12 7l4.500 5-4.500 5-4.500-5z" fill="none" stroke="#d9f4e5" strokeWidth="1.200" />
              <path d="M12 9.500v5M10 12h4" stroke="#d9f4e5" />
            </svg>
          </TaskIcon>
          <TaskIcon label="FileZilla">
            <span className="flex size-[22px] items-center justify-center bg-[#b50f0d] text-[15px] font-bold text-white italic">Fz</span>
          </TaskIcon>
        </div>
      </div>
      <div className="flex items-center justify-end pr-[18px] text-[12px] leading-4">
        <ChevronUp className="size-4" />
        <span className="ml-4 flex size-4 items-center justify-center bg-white text-[13px] font-black text-[#15162c]">
          <span className="mr-px -ml-1.5 size-2.5 rounded-full bg-[#21b793]" />K
        </span>
        <Mic className="ml-4 size-4 text-[#d9645f]" strokeWidth={1.500} />
        <span className="ml-[18px] text-center">ENG<br />US</span>
        <svg viewBox="0 0 18 18" className="ml-4 size-[18px]" fill="none" stroke="currentColor" strokeWidth="1.300" aria-hidden="true">
          <path d="M11 2.500H1.500v10.500h13V9M5 16h7M8.500 13v3M12.500 1.500h4v4h-4zM14.500 5.500V9" />
        </svg>
        <Volume2 className="ml-2 size-4" strokeWidth={1.500} />
        <span className="ml-4 text-right">10:03<br />13/08/2025</span>
      </div>
    </footer>
  )
}

export default function App() {
  return (
    <div className="flex h-screen flex-col overflow-hidden bg-[#07060b] font-['Noto_Sans','Open_Sans',sans-serif]">
      <BrowserBar />
      <div className="relative flex min-h-0 flex-1">
        <OperaRail />
        <div className="flex min-w-0 flex-1 flex-col">
          <AdminBar />
          <div className="flex min-h-0 flex-1">
            <WpMenu />
            <Page />
          </div>
        </div>
        <div className="flex w-[15px] shrink-0 flex-col items-center bg-[#1f2330]">
          <ChevronUp className="size-3.5 shrink-0 text-[#b5b7c4]" />
          <span className="h-[558px] w-2 rounded bg-[#454960]" />
          <ChevronDown className="mt-auto size-3 shrink-0 text-[#7d8094]" />
        </div>
        <RecorderBar />
        <SidePill />
      </div>
      <Taskbar />
    </div>
  )
}
